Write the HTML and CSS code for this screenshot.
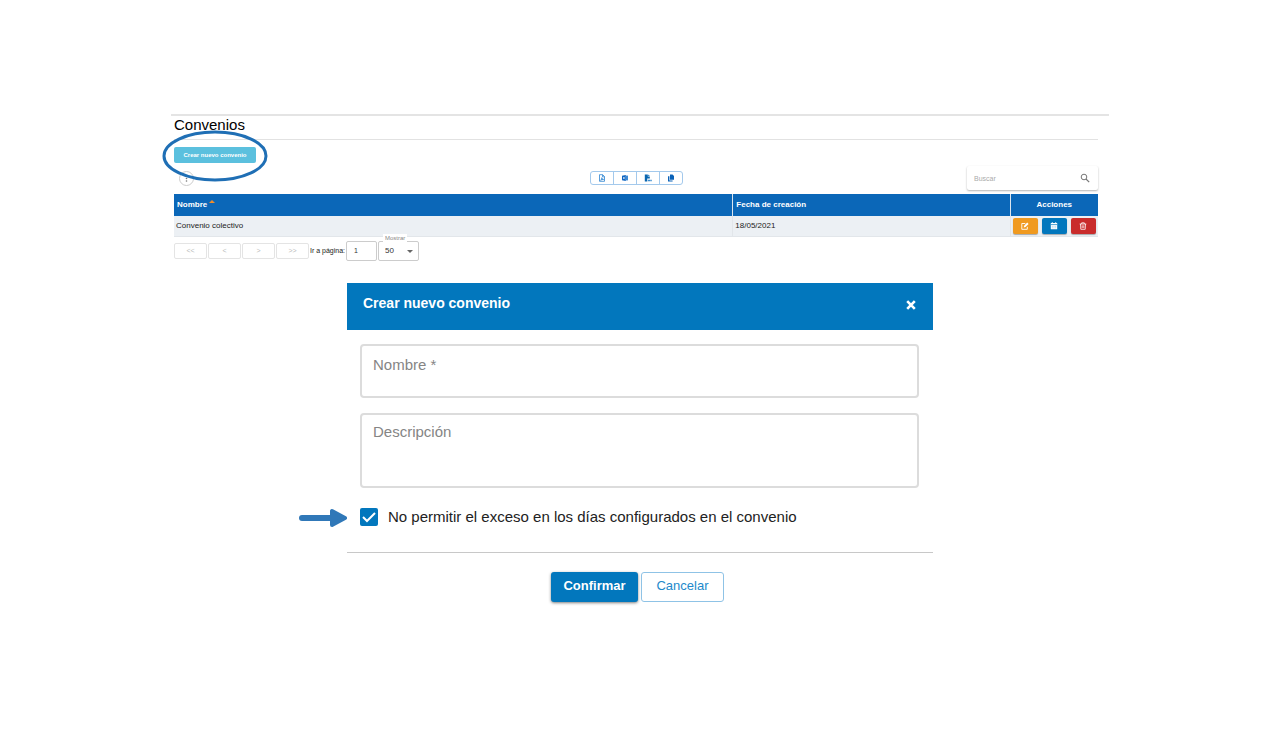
FILE: index.html
```html
<!DOCTYPE html>
<html lang="es">
<head>
<meta charset="utf-8">
<meta name="viewport" content="width=device-width, initial-scale=1">
<title>Convenios</title>
<link rel="stylesheet" href="styles.css">
</head>
<body>
<main class="page">
  <section class="panel">
    <h1 class="title">Convenios</h1>
    <div class="create-row">
      <div class="create-wrap">
        <button class="create" type="button">Crear nuevo convenio</button>
        <svg class="ring" viewBox="0 0 106 52" aria-hidden="true"><ellipse cx="53" cy="26" rx="51" ry="24" fill="none" stroke="#1f6fb5" stroke-width="3"/></svg>
      </div>
    </div>
    <div class="tools">
      <button class="more" type="button" aria-label="Más opciones"><svg viewBox="0 0 16 16"><g fill="#777"><circle cx="8" cy="5" r="1"/><circle cx="8" cy="8" r="1"/><circle cx="8" cy="11" r="1"/></g></svg></button>
      <div class="exports">
        <button type="button" aria-label="Exportar a PDF"><svg viewBox="0 0 8 8"><path d="M1.5.7h3.2l1.8 1.8v4.8h-5zM4.5.8v2h2M2.6 6.2c1.2-.8 1.5-2.2 1.2-2.5-.5.9.8 1.8 1.8 1.7-1-.2-2 .1-3 .8" fill="none" stroke="#2b83d0" stroke-width=".8"/></svg></button>
        <button type="button" aria-label="Exportar a Excel"><svg viewBox="0 0 8 8"><path d="M1 1.8l3.8-.8v6L1 6.2z" fill="#0b62c0"/><path d="M4.8 1.6h2.2v4.8H4.8" fill="#3c8ad6"/><path d="M2.1 2.9l1.6 2.2m0-2.2L2.1 5.1" stroke="#fff" stroke-width=".6"/></svg></button>
        <button type="button" aria-label="Exportar a CSV"><svg viewBox="0 0 8 8"><path d="M.8.4h3v2h2v2H3.2v3H.8z" fill="#0a66b0"/><path d="M4.2.4l1.6 1.6H4.2z" fill="#0b6fc2"/><path d="M3.8 6.4h4" stroke="#0b6fc2" stroke-width="1.5" stroke-dasharray="1 .4"/></svg></button>
        <button type="button" aria-label="Copiar"><svg viewBox="0 0 8 8"><path d="M3 .5h2.5l1.5 1.5v3.8H3z" fill="#0a62b8"/><path d="M1 2.2h1.4v4.2h3.2v1.1H1z" fill="#0a62b8"/></svg></button>
      </div>
      <label class="search">
        <input type="text" placeholder="Buscar" aria-label="Buscar">
        <svg viewBox="0 0 10 10" aria-hidden="true"><circle cx="4" cy="4" r="2.8" fill="none" stroke="#777" stroke-width="1"/><path d="M6 6l3.2 3.2" stroke="#777" stroke-width="1.2"/></svg>
      </label>
    </div>
    <table class="grid">
      <colgroup><col><col class="c-date"><col class="c-actions"></colgroup>
      <thead><tr>
        <th>Nombre <svg class="sort" viewBox="0 0 6 3" aria-hidden="true"><path d="M0 3l3-3 3 3z" fill="#f28c28"/></svg></th>
        <th>Fecha de creación</th>
        <th class="center">Acciones</th>
      </tr></thead>
      <tbody><tr>
        <td>Convenio colectivo</td>
        <td>18/05/2021</td>
        <td><div class="actions">
          <button class="edit" type="button" aria-label="Editar"><svg viewBox="0 0 8 8"><path d="M4.3 1.5H.8v5.8h5.5V4.8" fill="none" stroke="#fff" stroke-width=".9"/><path d="M2.7 5.5l.4-1.7L6.2.6l1.4 1.4-3.1 3.1z" fill="#fff"/></svg></button>
          <button class="calendar" type="button" aria-label="Calendario"><svg viewBox="0 0 8 8"><path d="M.8 1h1V.3h1V1h2.4V.3h1V1h1v6.2H.8z" fill="#fff"/><path d="M1 2.6h6" stroke="#0277bd" stroke-width=".7"/><path d="M1.8 4.4h4.4M1.8 5.8h4.4" stroke="#7fbbe0" stroke-width=".6" stroke-dasharray="1 .7"/></svg></button>
          <button class="delete" type="button" aria-label="Eliminar"><svg viewBox="0 0 8 8"><path d="M.7 2h6.6M2.7 2V.8h2.6V2M1.5 2l.3 5.3h4.4L6.5 2M3.2 3.3v2.8M4.8 3.3v2.8" fill="none" stroke="#fff" stroke-width=".8"/></svg></button>
        </div></td>
      </tr></tbody>
    </table>
    <nav class="pager" aria-label="Paginación">
      <button type="button" disabled>&lt;&lt;</button>
      <button type="button" disabled>&lt;</button>
      <button type="button" disabled>&gt;</button>
      <button type="button" disabled>&gt;&gt;</button>
      <label class="goto" for="goto">Ir a página:</label>
      <input id="goto" class="goto-input" type="text" value="1">
      <div class="show">
        <label for="show">Mostrar</label>
        <select id="show"><option>50</option></select>
        <svg viewBox="0 0 6 3" aria-hidden="true"><path d="M0 0h6L3 3z" fill="#666"/></svg>
      </div>
    </nav>
  </section>

  <form class="dialog">
    <header class="dialog-head">
      <h2>Crear nuevo convenio</h2>
      <button type="button" aria-label="Cerrar"><svg viewBox="0 0 10 10"><path d="M1.2 1.2l7.6 7.6m0-7.6L1.2 8.8" stroke="#fff" stroke-width="2.6"/></svg></button>
    </header>
    <div class="fields">
      <input class="name" type="text" placeholder="Nombre *" aria-label="Nombre">
      <textarea placeholder="Descripción" aria-label="Descripción"></textarea>
      <div class="check-row">
        <svg class="arrow" viewBox="0 0 48 20" aria-hidden="true"><path d="M3 10h30" stroke="#3078b8" stroke-width="6" stroke-linecap="round"/><path d="M33 3v14l13-7z" fill="#3078b8" stroke="#3078b8" stroke-width="4" stroke-linejoin="round"/></svg>
        <input id="limit" type="checkbox" checked>
        <svg class="tick" viewBox="0 0 18 18" aria-hidden="true"><path d="M3 9l4 4 8-8" fill="none" stroke="#fff" stroke-width="2"/></svg>
        <label for="limit">No permitir el exceso en los días configurados en el convenio</label>
      </div>
    </div>
    <footer class="dialog-foot">
      <button class="confirm" type="button">Confirmar</button>
      <button class="cancel" type="button">Cancelar</button>
    </footer>
  </form>
</main>
</body>
</html>
```
FILE: styles.css
```css
* { box-sizing: border-box; }
body {
  margin: 0;
  background: #fff;
  color: #222;
  font-family: "Liberation Sans", Arial, sans-serif;
  font-size: 7px;
}
button, input, select, textarea { font: inherit; margin: 0; }
button { padding: 0; display: flex; align-items: center; justify-content: center; }
svg { display: block; }

.page { padding: 114px 16px 32px; }
.panel {
  max-width: 938px;
  margin: 0 auto;
  padding: 0 11px 0 3px;
  border-top: 2px solid #e4e4e4;
}
.title {
  margin: 0;
  height: 24px;
  border-bottom: 1px solid #e2e2e2;
  color: #000;
  font-size: 15px;
  font-weight: 400;
  line-height: 18px;
}
.create-row { display: flex; padding-top: 7px; }
.create-wrap { position: relative; }
.create {
  width: 82px;
  height: 16px;
  border: 0;
  border-radius: 2px;
  background: #5bc0de;
  color: #fff;
  font-weight: 700;
  font-size: 6px;
}
.ring { position: absolute; z-index: 1; left: -12px; top: -17px; width: 106px; height: 52px; pointer-events: none; }

.tools {
  display: grid;
  grid-template-columns: 1fr auto 1fr;
  align-items: center;
  height: 24px;
  margin: 3px 0 4px;
}
.more {
  width: 15px;
  height: 15px;
  margin-left: 5px;
  border: 1px solid #ccc;
  border-radius: 50%;
  background: #fff;
}
.more svg { width: 13px; height: 13px; }
.exports { display: flex; border: 1px solid #a3c9ec; border-radius: 3px; }
.exports button { width: 23px; height: 12px; border: 0; border-right: 1px solid #a3c9ec; background: none; }
.exports button:last-child { width: 22px; border-right: 0; }
.exports svg { width: 8px; height: 8px; }
.search {
  justify-self: end;
  display: flex;
  align-items: center;
  width: 131px;
  height: 24px;
  padding: 0 8px 0 7px;
  border-radius: 2px;
  box-shadow: 0 1px 2px rgba(0, 0, 0, .3);
}
.search input { flex: 1; min-width: 0; padding: 0; border: 0; outline: 0; background: none; }
.search input::placeholder { color: #aaa; opacity: 1; }
.search svg { width: 10px; height: 10px; }

.grid { width: 100%; table-layout: fixed; border-collapse: collapse; }
.c-date { width: 30%; }
.c-actions { width: 88px; }
.grid th {
  height: 22px;
  padding: 0 3px 2px;
  border-left: 1px solid #dce5ee;
  background: #0b67b8;
  color: #fff;
  font-size: 8px;
  text-align: left;
}
.grid th:first-child { border-left: 0; }
.grid .center { text-align: center; }
.sort { display: inline-block; width: 6px; height: 3px; vertical-align: 4px; }
.grid td { height: 20px; padding: 0 2px; background: #ecf0f4; font-size: 8px; border-bottom: 1px solid #e2e6ea; }
.grid td + td { border-left: 1px solid #e2e6ea; }
.actions { display: flex; justify-content: center; gap: 4px; }
.actions button { width: 25px; height: 16px; border: 0; border-radius: 2px; box-shadow: 0 1px 1px rgba(0, 0, 0, .3); }
.actions svg { width: 8px; height: 8px; }
.edit { background: #f09a20; }
.calendar { background: #0277bd; }
.delete { background: #c92c2c; }

.pager { display: flex; align-items: center; gap: 1px; height: 20px; margin-top: 4px; }
.pager button { width: 33px; height: 16px; border: 1px solid #e4e4e4; border-radius: 2px; background: #fff; color: #bbb; }
.goto { font-size: 7px; white-space: nowrap; }
.goto-input { width: 31px; height: 20px; padding: 0 7px; border: 1px solid #ccc; border-radius: 2px; color: #333; }
.show { position: relative; }
.show label { position: absolute; top: -7px; left: 5px; padding: 0 2px; background: #fff; color: #888; font-size: 6px; line-height: 8px; }
.show select {
  display: block;
  width: 41px;
  height: 20px;
  padding: 0 6px;
  appearance: none;
  border: 1px solid #ccc;
  border-radius: 2px;
  background: #fff;
  color: #333;
  font-size: 8px;
}
.show svg { position: absolute; top: 9px; right: 6px; width: 6px; height: 3px; pointer-events: none; }

.dialog { max-width: 586px; margin: 22px auto 0; font-size: 15px; }
.dialog-head {
  display: flex;
  justify-content: space-between;
  height: 47px;
  padding: 11px 17px 0 16px;
  background: #0277bd;
}
.dialog-head h2 { margin: 0; color: #fff; font-size: 14px; line-height: 18px; }
.dialog-head button { width: 10px; height: 22px; border: 0; background: none; }
.dialog-head svg { width: 10px; height: 10px; }
.fields {
  display: flex;
  flex-direction: column;
  gap: 15px;
  padding: 14px 14px 21px 13px;
  border-bottom: 1px solid #c8c8c8;
}
.name, .fields textarea {
  display: block;
  width: 100%;
  border: 2px solid #dcdcdc;
  border-radius: 4px;
  background: #fff;
  resize: none;
}
.name { height: 54px; padding: 0 12px 12px 11px; }
.fields textarea { height: 75px; padding: 8px 12px 8px 11px; line-height: 18px; }
.fields ::placeholder { color: #858585; opacity: 1; }
.check-row { position: relative; display: flex; align-items: center; gap: 10px; height: 28px; color: #222; }
.check-row input { appearance: none; width: 18px; height: 18px; border-radius: 2px; background: #0277bd; }
.tick { position: absolute; left: 0; top: 5px; width: 18px; height: 18px; pointer-events: none; }
.arrow { position: absolute; left: -61px; top: 5px; width: 48px; height: 20px; }
.dialog-foot { display: flex; justify-content: center; gap: 3px; padding: 19px 5px 0 0; }
.dialog-foot button { height: 30px; padding-bottom: 2px; border-radius: 3px; font-size: 13px; }
.confirm { width: 87px; border: 0; background: #0277bd; color: #fff; font-weight: 700; box-shadow: 0 1px 3px rgba(0, 0, 0, .5); }
.cancel { width: 83px; border: 1px solid #8fc3e6; background: #fff; color: #2289cb; }
```
